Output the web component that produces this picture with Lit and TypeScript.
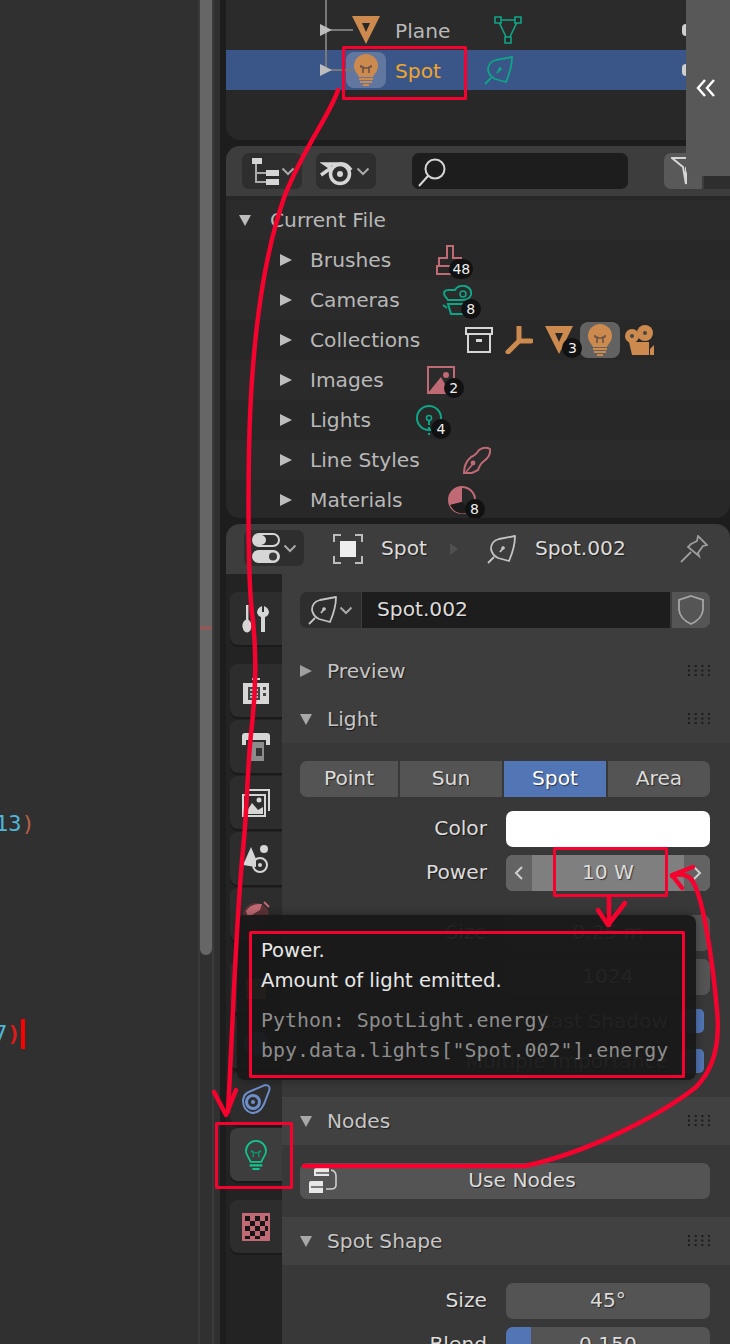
import { LitElement, html, css, svg, nothing } from "lit";
import { customElement } from "lit/decorators.js";

const OR = "#cc8a4e", TE = "#0fa587", RO = "#c06a75", LG = "#d6d6d6";
const ic = (w: number, h: number, body: any, cls = "") =>
  html`<svg class="ic ${cls}" width=${w} height=${h} viewBox="0 0 ${w} ${h}" fill="none">${body}</svg>`;

const tri = (c = "#bdbdbd") => ic(12, 12, svg`<path d="M0 0L12 6L0 12Z" fill=${c}/>`);
const triDown = (c = "#a8a8a8") => ic(12, 12, svg`<path d="M0 1H12L6 12Z" fill=${c}/>`);
const chev = () => ic(14, 9, svg`<path d="M1.5 1.5L7 7L12.5 1.5" stroke="#a9a9a9" stroke-width="2"/>`);

const bulbFill = (c = OR) => ic(26, 32, svg`
  <path d="M13 0a12 12 0 0 1 12 12c0 5-3 7-5 11H6c-2-4-5-6-5-11A12 12 0 0 1 13 0Z" fill=${c}/>
  <path d="M8 11v2h2v6M18 11v2h-2v6M10 14h6" stroke="#6b5048" stroke-width="1.6"/>
  <path d="M6 25h14M7 28h12M10 31h6" stroke=${c} stroke-width="2"/>`);
const bulbLine = (c = "#12c48f") => html`<svg class="ic" width="24" height="30" viewBox="0 0 26 33" fill="none">
  <path d="M13 1a11 11 0 0 1 11 11c0 5-4 8-5 12H7c-1-4-5-7-5-12A11 11 0 0 1 13 1Z" stroke=${c} stroke-width="2"/>
  <path d="M8 11v2h2v6M18 11v2h-2v6M10 14h6" stroke="#0e8f6c" stroke-width="1.6"/>
  <path d="M6 28h14M9 32h8" stroke=${c} stroke-width="2.4"/></svg>`;
const leaf = (c = TE) => ic(29, 29, svg`
  <path d="M28 1L12 4Q4 6 4 14Q5 20 11 23L22 26Q28 12 28 1Z" stroke=${c} stroke-width="1.8" stroke-linejoin="round"/>
  <path d="M1 28L7 22M13 17L17 12" stroke=${c} stroke-width="1.8"/><circle cx="16" cy="13" r="1.8" fill=${c}/>`);
const meshTri = () => ic(28, 28, svg`
  <path d="M4 4H24L14 25Z" stroke=${TE} stroke-width="1.6"/>
  <path d="M1 1h6v6H1zM21 1h6v6h-6zM11 21h6v6h-6z" stroke=${TE} stroke-width="1.6" fill="#282828"/>`);
const planeFill = () => ic(28, 28, svg`<path d="M0 0H28L14 28Z" fill=${OR}/><path d="M10 7H18L14 16Z" fill="#282828"/>`);
const brush = () => ic(28, 30, svg`<path d="M11 1h6v12h8v8h2v8H1v-8h2v-8h8Z" stroke=${RO} stroke-width="2"/><path d="M3 21H25" stroke=${RO} stroke-width="2"/>`);
const camLine = () => ic(30, 30, svg`
  <path d="M3 11Q0 5 7 5L13 5Q16 0 23 1Q30 3 29 10Q27 15 20 15H6Z" stroke=${TE} stroke-width="2"/>
  <circle cx="21" cy="9" r="3" stroke=${TE} stroke-width="1.6"/>
  <path d="M6 19H22V29H9ZM1 20L5 23" stroke=${TE} stroke-width="2"/>`);
const boxIc = () => ic(28, 26, svg`
  <path d="M1 1h26v6H1zM3 7v18h22V7" stroke=${LG} stroke-width="2"/><path d="M11 12h6v3h-6z" fill=${LG}/>`);
const empty = () => ic(28, 28, svg`<path d="M14 1V15M14 15L26 15M14 15L3 26" stroke=${OR} stroke-width="5" stroke-linecap="round"/>`);
const camFill = () => ic(30, 30, svg`
  <circle cx="8" cy="11" r="7" fill=${OR}/><circle cx="21" cy="8" r="8" fill=${OR}/>
  <circle cx="8" cy="11" r="2" fill="#444"/><circle cx="21" cy="8" r="2" fill="#444"/>
  <path d="M5 17H25V30H8ZM26 24L30 20V30H26Z" fill=${OR}/>`);
const image = () => ic(28, 28, svg`
  <path d="M1 1H27V27H1Z" stroke=${RO} stroke-width="2"/><path d="M1 27L14 11L23 27Z" fill=${RO}/><circle cx="19" cy="9" r="3" fill=${RO}/>`);
const lamp = () => ic(26, 30, svg`
  <circle cx="13" cy="13" r="12" stroke=${TE} stroke-width="2"/><circle cx="13" cy="13" r="2.5" stroke=${TE} stroke-width="1.6"/>
  <path d="M13 16V30" stroke=${TE} stroke-width="2" stroke-dasharray="4 2"/>`);
const lineStyle = () => ic(28, 28, svg`
  <path d="M1 27Q1 17 8 11Q13 9 16 4Q22 0 27 3Q28 10 21 15Q17 18 15 24L9 27Z" stroke=${RO} stroke-width="2"/>
  <circle cx="10" cy="17" r="2.4" fill=${RO}/><path d="M3 26L9 19" stroke=${RO} stroke-width="1.6"/>`);
const material = () => ic(28, 30, svg`
  <circle cx="14" cy="15" r="13" stroke=${RO} stroke-width="2"/>
  <path d="M14 2A13 13 0 0 0 2 20L14 17Z" fill=${RO}/><path d="M2 20L14 17L22 26A13 13 0 0 1 4 23Z" fill="#1c1c1c"/>`);
const mag = () => ic(30, 30, svg`<circle cx="17" cy="12" r="9.5" stroke=${LG} stroke-width="2"/><path d="M10 19L1 29" stroke=${LG} stroke-width="2"/>`);
const outlinerIc = () => ic(28, 28, svg`
  <path d="M1 1H11V7H1zM15 13H28V19H15zM15 22H28V28H15z" fill=${LG}/><path d="M5 7V25H15M5 16H15" stroke="#aaa" stroke-width="2"/>`);
const blenderIc = () => ic(34, 30, svg`
  <circle cx="20" cy="18" r="9.5" stroke=${LG} stroke-width="3.5"/><circle cx="20" cy="18" r="3" fill=${LG}/>
  <path d="M1 19L11 12L5 8H18Q26 6 31 14" stroke=${LG} stroke-width="3.4"/>`);
const toggles = () => ic(30, 30, svg`
  <rect x="2" y="1" width="26" height="12" rx="6" stroke=${LG} stroke-width="2"/><rect x="2" y="2" width="13" height="10" rx="5" fill=${LG}/>
  <rect x="1" y="17" width="28" height="13" rx="6.5" fill=${LG}/><circle cx="22" cy="23.5" r="4" fill="#3a3a3a"/>`);
const objIc = () => ic(30, 30, svg`
  <path d="M1 8V1H8M22 1H29V8M29 22V29H22M8 29H1V22" stroke="#bdbdbd" stroke-width="2"/><rect x="7" y="7" width="16" height="16" fill="#eee"/>`);
const pin = () => ic(28, 28, svg`
  <path d="M18 1L27 10L23 11L18 18L19 21L8 12L11 9L17 6Z" stroke="#9c9c9c" stroke-width="1.8"/><path d="M1 27L11 17" stroke="#9c9c9c" stroke-width="1.8"/>`);
const shield = () => ic(28, 30, svg`<path d="M14 1L26 5V15Q25 24 14 29Q3 24 2 15V5Z" stroke="#a6a6a6" stroke-width="1.8"/>`);
const grip = () => ic(22, 12, svg`${[0, 1, 2].flatMap((r) => [0, 1, 2, 3].map((c) => svg`<rect x=${c * 6.7} y=${r * 4.5} width="2" height="2" fill="#1c1c1c"/>`))}`, "grip");
const useNodes = () => ic(30, 28, svg`
  <path d="M6 3Q6 1 8 1H21V9H6Z" fill="#e8e8e8"/><path d="M1 16Q1 14 3 14H15V26H1Z" fill="#e8e8e8"/>
  <path d="M3 20H15" stroke="#555" stroke-width="1.5"/><path d="M8 6H21" stroke="#555" stroke-width="1.5"/>
  <path d="M23 3Q28 4 28 9V18Q28 22 23 22H18" stroke="#cfcfcf" stroke-width="1.6"/>`);

const T = {
  tool: ic(28, 28, svg`<path d="M4 0h2.4v15H4z" fill=${LG}/><ellipse cx="5" cy="21" rx="4.6" ry="6.5" fill=${LG}/><path d="M20 1v6h2V1q5 2 5 7-1 3-4 4v15h-4V12q-3-1-4-4 0-5 5-7Z" fill=${LG}/>`),
  render: ic(28, 28, svg`<path d="M1 6H27V27H1Z" fill=${LG}/><path d="M6 10H18V23H6ZM21 10h3v3h-3ZM21 16h3v3h-3Z" fill="#444"/><path d="M8 13H16M8 17H16M8 20H16" stroke=${LG} stroke-width="1.4"/><path d="M10 2h8" stroke=${LG} stroke-width="2"/>`),
  output: ic(28, 28, svg`<path d="M0 3Q0 0 3 0H25Q28 0 28 3V12H24V7H4V12H0Z" fill=${LG}/><path d="M6 9H22V28H6Z" fill="#8c8c8c"/><path d="M14 15h6v8h-6z" fill="#333"/>`),
  view: ic(28, 28, svg`<path d="M5 1H27V22M1 6H23V27H1Z" stroke=${LG} stroke-width="2"/><path d="M3 25L10 14L16 21L21 18V25Z" fill=${LG}/><circle cx="17" cy="11" r="2.5" fill=${LG}/>`),
  scene: ic(28, 28, svg`<path d="M1 20L9 2L14 14V22Z" fill=${LG}/><circle cx="22" cy="4" r="4" fill=${LG}/><circle cx="18" cy="20" r="7" stroke=${LG} stroke-width="2"/><circle cx="18" cy="20" r="2" fill=${LG}/>`),
  world: ic(28, 28, svg`<circle cx="14" cy="15" r="13" fill="#5e3338"/><path d="M4 10Q10 2 20 3L18 9L10 14L6 16Z" fill=${RO}/><path d="M22 1L27 6" stroke=${RO} stroke-width="2"/>`),
  object: ic(28, 28, svg`<path d="M4 6H24V26H4Z" fill=${OR}/>`),
  mod: ic(28, 28, svg`<circle cx="14" cy="14" r="12" fill="#5d7fbd"/>`),
  constraint: ic(30, 30, svg`<path d="M2 16Q3 9 10 7L24 1Q30 1 28 7L23 20Q19 29 11 29Q2 27 2 16Z" stroke="#6d8ecb" stroke-width="2"/><circle cx="12" cy="18" r="6.5" stroke="#6d8ecb" stroke-width="3"/><circle cx="12" cy="18" r="2" fill="#6d8ecb"/>`),
  checker: ic(28, 28, svg`<rect width="28" height="28" fill=${RO}/><path d="M3 3h5v5H3zM13 3h5v5h-5zM23 3h3v5h-3zM8 8h5v5H8zM18 8h5v5h-5zM3 13h5v5H3zM13 13h5v5h-5zM23 13h3v5h-3zM8 18h5v5H8zM18 18h5v5h-5zM3 23h5v3H3zM13 23h5v3h-5z" fill="#161616"/>`),
};

type Row = { name: string; gap: number; icons: any[] };
const rows: Row[] = [
  { name: "Brushes", gap: 45, icons: [[brush(), "48"]] },
  { name: "Cameras", gap: 42, icons: [[camLine(), "8"]] },
  { name: "Collections", gap: 45, icons: [] },
  { name: "Images", gap: 43, icons: [[image(), "2"]] },
  { name: "Lights", gap: 45, icons: [[lamp(), "4"]] },
  { name: "Line Styles", gap: 43, icons: [[lineStyle(), ""]] },
  { name: "Materials", gap: 45, icons: [[material(), "8"]] },
];
const withBadge = (i: any, b: string) =>
  html`<span class="iconwrap">${i}${b ? html`<span class="badge">${b}</span>` : nothing}</span>`;

@customElement("app-root")
export class AppRoot extends LitElement {
  static styles = css`
    :host { display: block; width: 730px; height: 1344px; font-family: "DejaVu Sans", sans-serif; font-size: 20.2px; }
    * { box-sizing: border-box; }
    .ic { display: block; flex: none; }
    .app { position: relative; display: flex; width: 730px; height: 1344px; overflow: hidden; background: #1d1d1d; }
    .editor { width: 220px; flex: none; display: flex; background: #303030; }
    .code { width: 198px; flex: none; overflow: hidden; font-family: "DejaVu Sans Mono", monospace; font-size: 22px; color: #4fb6d8; padding-top: 809px; }
    .code div { height: 30px; line-height: 30px; white-space: pre; }
    .l1 { margin-left: -5px; }
    .l2 { margin-top: 180px; margin-left: -6px; display: flex; align-items: center; }
    .paren { color: #b56248; }
    .redp { color: #e01a1a; font-weight: 700; }
    .caret { width: 4px; height: 30px; background: #ff0000; }
    .track { width: 16px; flex: none; border-left: 2px solid #3a3a3a; border-right: 2px solid #3a3a3a; }
    .thumb { height: 955px; background: #666; border-radius: 0 0 6px 6px; padding-top: 626px; }
    .mark { height: 4px; background: #8f5a5a; }
    .gutter { width: 6px; flex: none; }
    .right { width: 504px; flex: none; display: flex; flex-direction: column; gap: 6px; }
    .out { background: #282828; color: #b8b8b8; overflow: hidden; }
    .top { height: 140px; border-radius: 0 0 14px 14px; }
    .second { height: 372px; border-radius: 14px; display: flex; flex-direction: column; }
    .row { height: 40px; flex: none; display: flex; align-items: center; position: relative; }
    .row:nth-child(odd) { background: #2b2b2b; }
    .stub { height: 10px; background: #2b2b2b; }
    .p1 { background: #2b2b2b !important; height: 40px; }
    .sel { background: #3a5688 !important; }
    .p-cell { margin-left: 126px; width: 28px; }
    .tree { position: absolute; left: 99px; top: -10px; bottom: 0; width: 2px; background: #777; }
    .tree.last { bottom: 20px; }
    .branch { position: absolute; left: 99px; top: 19px; width: 28px; height: 2px; background: #777; }
    .tarrow { position: absolute; left: 94px; top: 14px; }
    .rowlab { margin-left: 15px; padding-top: 2px; }
    .plane-mesh { margin-left: 44px; }
    .spot-cell { margin-left: 120px; width: 40px; height: 36px; border-radius: 8px; background: rgba(255, 255, 255, 0.2); display: flex; align-items: center; justify-content: center; }
    .spot-lab { margin-left: 9px; padding-top: 2px; color: #f0a52a; }
    .spot-leaf { margin-left: 43px; }
    .edge { position: absolute; left: 456px; top: 14px; width: 8px; height: 12px; border-radius: 4px; background: #cfcfcf; }
    .ohead { height: 50px; flex: none; background: #3d3d3d; display: flex; align-items: center; padding-left: 16px; }
    .dd { width: 60px; height: 36px; flex: none; background: #2e2e2e; border-radius: 7px; display: flex; align-items: center; gap: 2px; padding-left: 9px; }
    .dd + .dd { margin-left: 14px; padding-left: 4px; }
    .search { width: 218px; height: 36px; margin-left: 36px; background: #1d1d1d; border-radius: 7px; padding: 2px 0 0 6px; display: flex; align-items: center; }
    .filter { width: 38px; height: 36px; margin-left: 36px; background: #595959; border-radius: 7px 0 0 7px; display: flex; align-items: center; justify-content: center; }
    .filter2 { width: 26px; height: 36px; margin-left: 2px; background: #2e2e2e; flex: none; }
    .orows { flex: 1; padding-top: 4px; }
    .cf { padding-left: 13px; }
    .cf .lab { margin-left: 19px; }
    .child { padding-left: 54px; }
    .child .lab { margin-left: 18px; }
    .icons { display: flex; align-items: center; }
    .iconwrap { position: relative; display: block; }
    .badge { position: absolute; right: -9px; bottom: -4px; min-width: 20px; height: 20px; padding: 0 3px; border-radius: 10px; background: #111; color: #eee; font-size: 14px; line-height: 20px; text-align: center; }
    .coll { gap: 12px; }
    .hl { width: 40px; height: 36px; border-radius: 8px; background: #626262; display: flex; align-items: center; justify-content: center; margin: 0 -8px 0 -5px; }
    .props { flex: 1; min-height: 0; background: #3d3d3d; border-radius: 14px 14px 0 0; overflow: hidden; color: #dcdcdc; text-shadow: 1px 1px 1px rgba(0, 0, 0, 0.55); display: flex; flex-direction: column; }
    .phead { height: 50px; flex: none; display: flex; align-items: center; padding-left: 18px; }
    .phead .dd { width: 60px; padding-left: 7px; margin-top: -2px; }
    .crumb { margin-left: 29px; }
    .c-name { margin-left: 18px; padding-bottom: 2px; }
    .sep { margin: 0 29px 0 23px; width: 0; height: 0; border: 6px solid transparent; border-left: 8px solid #505050; border-right: 0; }
    .c-data { margin-left: 19px; padding-bottom: 2px; }
    .pinbtn { margin-left: auto; margin-right: 22px; }
    .pbody { flex: 1; display: flex; min-height: 0; }
    .tabs { width: 56px; flex: none; background: #232323; padding: 18px 0 0 4px; display: flex; flex-direction: column; gap: 3px; }
    .tab { height: 53px; flex: none; background: #2d2d2d; border-radius: 8px 0 0 8px; box-shadow: 0 2px 0 #1a1a1a; display: flex; align-items: center; justify-content: center; }
    .tab.gap { margin-top: 16px; }
    .tab.on { background: #3d3d3d; }
    .main { flex: 1; min-width: 0; }
    .datarow { margin: 18px 20px 19px 18px; height: 36px; display: flex; gap: 1px; }
    .data-dd { width: 61px; background: #2e2e2e; border-radius: 7px 0 0 7px; display: flex; align-items: center; gap: 2px; padding-left: 8px; }
    .data-input { flex: 1; background: #1d1d1d; display: flex; align-items: center; padding: 0 0 2px 15px; }
    .data-sh { width: 38px; margin-left: 1px; background: #555; border-radius: 0 7px 7px 0; display: flex; align-items: center; justify-content: center; }
    .sect { height: 48px; display: flex; align-items: center; padding-left: 18px; color: #c6c6c6; background: #414141; }
    .sect .ic:first-child { margin-right: 15px; }
    .sect.flat { background: #3d3d3d; }
    .grip { margin-left: auto; margin-right: 20px; }
    .sbody { background: #383838; padding: 18px 20px 0 18px; }
    .light { height: 354px; }
    .nodes { height: 72px; }
    .shape { height: 90px; }
    .seg { display: grid; grid-template-columns: 98px 102px 102px 102px; gap: 2px; height: 36px; margin-bottom: 14px; }
    .seg div, .fld { background: #545454; display: flex; align-items: center; justify-content: center; padding-bottom: 2px; }
    .seg div:first-child { border-radius: 7px 0 0 7px; }
    .seg div:last-child { border-radius: 0 7px 7px 0; }
    .seg .on { background: #5276b5; color: #fff; }
    .frow { display: grid; grid-template-columns: 1fr 204px; column-gap: 19px; height: 36px; margin-bottom: 8px; align-items: center; }
    .frow label { text-align: right; padding-bottom: 2px; }
    .frow.apart { margin-bottom: 24px; }
    .fld { height: 36px; border-radius: 7px; }
    .white { background: #fff; }
    .fld.power { display: flex; justify-content: flex-start; background: #7f7f7f; overflow: hidden; padding: 0; }
    .pside { width: 26px; height: 36px; background: #636363; display: flex; align-items: center; justify-content: center; flex: none; }
    .pval { flex: 1; text-align: center; padding-bottom: 2px; }
    .check { display: flex; justify-content: flex-end; align-items: center; gap: 12px; height: 40px; padding-right: 6px; color: #c6c6c6; }
    .checks { margin-top: -2px; }
    .box { width: 24px; height: 24px; border-radius: 5px; background: #5276b5; flex: none; }
    .usebtn { position: relative; height: 36px; background: #545454; border-radius: 7px; display: flex; align-items: center; justify-content: center; padding: 0 0 2px 34px; }
    .usebtn .ic { position: absolute; left: 8px; top: 4px; }
    .blend { position: relative; overflow: hidden; }
    .blendfill { position: absolute; left: 0; top: 0; bottom: 0; width: 25px; background: #5276b5; }
    .blend span { position: relative; }
    .handle { position: absolute; left: 686px; top: 0; width: 44px; height: 176px; background: #585858; border-radius: 0 0 0 6px; display: flex; align-items: center; justify-content: center; padding-right: 4px; }
    .tip { position: absolute; left: 237px; top: 915px; width: 459px; height: 165px; background: rgba(24, 24, 24, 0.95); border-radius: 8px; padding: 21px 0 0 24px; color: #e8e8e8; text-shadow: none; font-size: 19.6px; box-shadow: 0 0 10px rgba(0, 0, 0, 0.35); }
    .tip div { height: 30px; line-height: 30px; white-space: pre; }
    .tip .py { font-family: "DejaVu Sans Mono", monospace; color: #8d8d8d; font-size: 19.9px; }
    .tip .py.first { margin-top: 10px; }
    .anno { position: absolute; left: 0; top: 0; pointer-events: none; }
    .anno rect { stroke-width: 3; }
  `;

  render() {
    const coll = html`${boxIc()} ${empty()} ${withBadge(planeFill(), "3")}
      <span class="hl">${bulbFill()}</span> ${camFill()}`;
    return html`<div class="app">
      <div class="editor">
        <div class="code">
          <div class="l1">13<span class="paren">)</span></div>
          <div class="l2">7<span class="redp">)</span><span class="caret"></span></div>
        </div>
        <div class="track"><div class="thumb"><div class="mark"></div></div></div>
      </div>
      <div class="gutter"></div>
      <div class="right">
        <div class="out top">
          <div class="stub"></div>
          <div class="row p1">
            <span class="tree"></span><span class="branch"></span><span class="tarrow">${tri()}</span>
            <span class="p-cell">${planeFill()}</span>
            <span class="rowlab">Plane</span><span class="plane-mesh">${meshTri()}</span>
            <span class="edge"></span>
          </div>
          <div class="row sel">
            <span class="tree last"></span><span class="branch"></span><span class="tarrow">${tri()}</span>
            <span class="spot-cell">${bulbFill()}</span>
            <span class="spot-lab">Spot</span><span class="spot-leaf">${leaf()}</span>
            <span class="edge"></span>
          </div>
        </div>
        <div class="out second">
          <div class="ohead">
            <div class="dd">${outlinerIc()}${chev()}</div>
            <div class="dd">${blenderIc()}${chev()}</div>
            <div class="search">${mag()}</div>
            <div class="filter">${ic(24, 28, svg`<path d="M1 1H23L15 11V27L12 10Z" stroke=${LG} stroke-width="2"/>`)}</div>
            <div class="filter2"></div>
          </div>
          <div class="orows">
            <div class="row cf">${triDown("#bdbdbd")}<span class="lab">Current File</span></div>
            ${rows.map((r) => html`<div class="row child">
              ${tri()}<span class="lab">${r.name}</span>
              <div class="icons ${r.name === "Collections" ? "coll" : ""}" style="margin-left:${r.gap}px">
                ${r.name === "Collections" ? coll : r.icons.map((i: any) => withBadge(i[0], i[1]))}
              </div>
            </div>`)}
          </div>
        </div>
        <div class="props">
          <div class="phead">
            <div class="dd">${toggles()}${chev()}</div>
            <span class="crumb">${objIc()}</span><span class="c-name">Spot</span>
            <span class="sep"></span>
            <span>${leaf("#c4c4c4")}</span><span class="c-data">Spot.002</span>
            <span class="pinbtn">${pin()}</span>
          </div>
          <div class="pbody">
            <div class="tabs">
              <div class="tab">${T.tool}</div>
              <div class="tab gap">${T.render}</div>
              <div class="tab">${T.output}</div>
              <div class="tab">${T.view}</div>
              <div class="tab">${T.scene}</div>
              <div class="tab">${T.world}</div>
              <div class="tab gap">${T.object}</div>
              <div class="tab">${T.mod}</div>
              <div class="tab">${T.constraint}</div>
              <div class="tab on">${bulbLine()}</div>
              <div class="tab gap">${T.checker}</div>
            </div>
            <div class="main">
              <div class="datarow">
                <div class="data-dd">${leaf("#c4c4c4")}${chev()}</div>
                <div class="data-input">Spot.002</div>
                <div class="data-sh">${shield()}</div>
              </div>
              <div class="sect flat">${tri("#a0a0a0")}<span>Preview</span>${grip()}</div>
              <div class="sect flat">${triDown()}<span>Light</span>${grip()}</div>
              <div class="sbody light">
                <div class="seg"><div>Point</div><div>Sun</div><div class="on">Spot</div><div>Area</div></div>
                <div class="frow"><label>Color</label><div class="fld white"></div></div>
                <div class="frow apart"><label>Power</label>
                  <div class="fld power">
                    <span class="pside">${ic(10, 14, svg`<path d="M8 1L2 7L8 13" stroke="#cfcfcf" stroke-width="2"/>`)}</span>
                    <span class="pval">10 W</span>
                    <span class="pside">${ic(10, 14, svg`<path d="M2 1L8 7L2 13" stroke="#cfcfcf" stroke-width="2"/>`)}</span>
                  </div>
                </div>
                <div class="frow"><label>Size</label><div class="fld">0.25 m</div></div>
                <div class="frow"><label></label><div class="fld">1024</div></div>
                <div class="checks">
                  <div class="check"><span>Cast Shadow</span><span class="box"></span></div>
                  <div class="check"><span>Multiple Importance</span><span class="box"></span></div>
                </div>
              </div>
              <div class="sect">${triDown()}<span>Nodes</span>${grip()}</div>
              <div class="sbody nodes"><div class="usebtn">${useNodes()}<span>Use Nodes</span></div></div>
              <div class="sect">${triDown()}<span>Spot Shape</span>${grip()}</div>
              <div class="sbody shape">
                <div class="frow"><label>Size</label><div class="fld">45°</div></div>
                <div class="frow"><label>Blend</label><div class="fld blend"><i class="blendfill"></i><span>0.150</span></div></div>
              </div>
            </div>
          </div>
        </div>
      </div>
      <div class="handle">${ic(20, 18, svg`<path d="M9 1L2 9L9 17M18 1L11 9L18 17" stroke="#fff" stroke-width="2.4"/>`)}</div>
      <div class="tip">
        <div>Power.</div>
        <div>Amount of light emitted.</div>
        <div class="py first">Python: SpotLight.energy</div>
        <div class="py">bpy.data.lights["Spot.002"].energy</div>
      </div>
      <svg class="anno" width="730" height="1344" viewBox="0 0 730 1344" fill="none" stroke="#f6022f" stroke-width="4.5" stroke-linecap="round" stroke-linejoin="round">
        <rect x="343.5" y="47.5" width="122" height="51"/>
        <rect x="554.5" y="848.5" width="112" height="47"/>
        <rect x="250.5" y="932.5" width="433" height="144"/>
        <rect x="216.5" y="1123.5" width="75" height="64"/>
        <path d="M338 90C330 115 305 145 285 195C262 260 251 350 249 450C248 520 248 590 253 620C256 650 256 690 252 725C247 765 248 800 243 850C236 920 234 1000 228 1112"/>
        <path d="M214 1092L226 1115L236 1090"/>
        <path d="M304 1166H525C590 1152 660 1115 695 1088C716 1068 720 1040 717 1010C713 965 703 890 690 878C684 873 678 874 672 876"/>
        <path d="M693 867L672 875L682 888"/>
        <path d="M609 898V925M598 910L608 925L625 903"/>
      </svg>
    </div>`;
  }
}
